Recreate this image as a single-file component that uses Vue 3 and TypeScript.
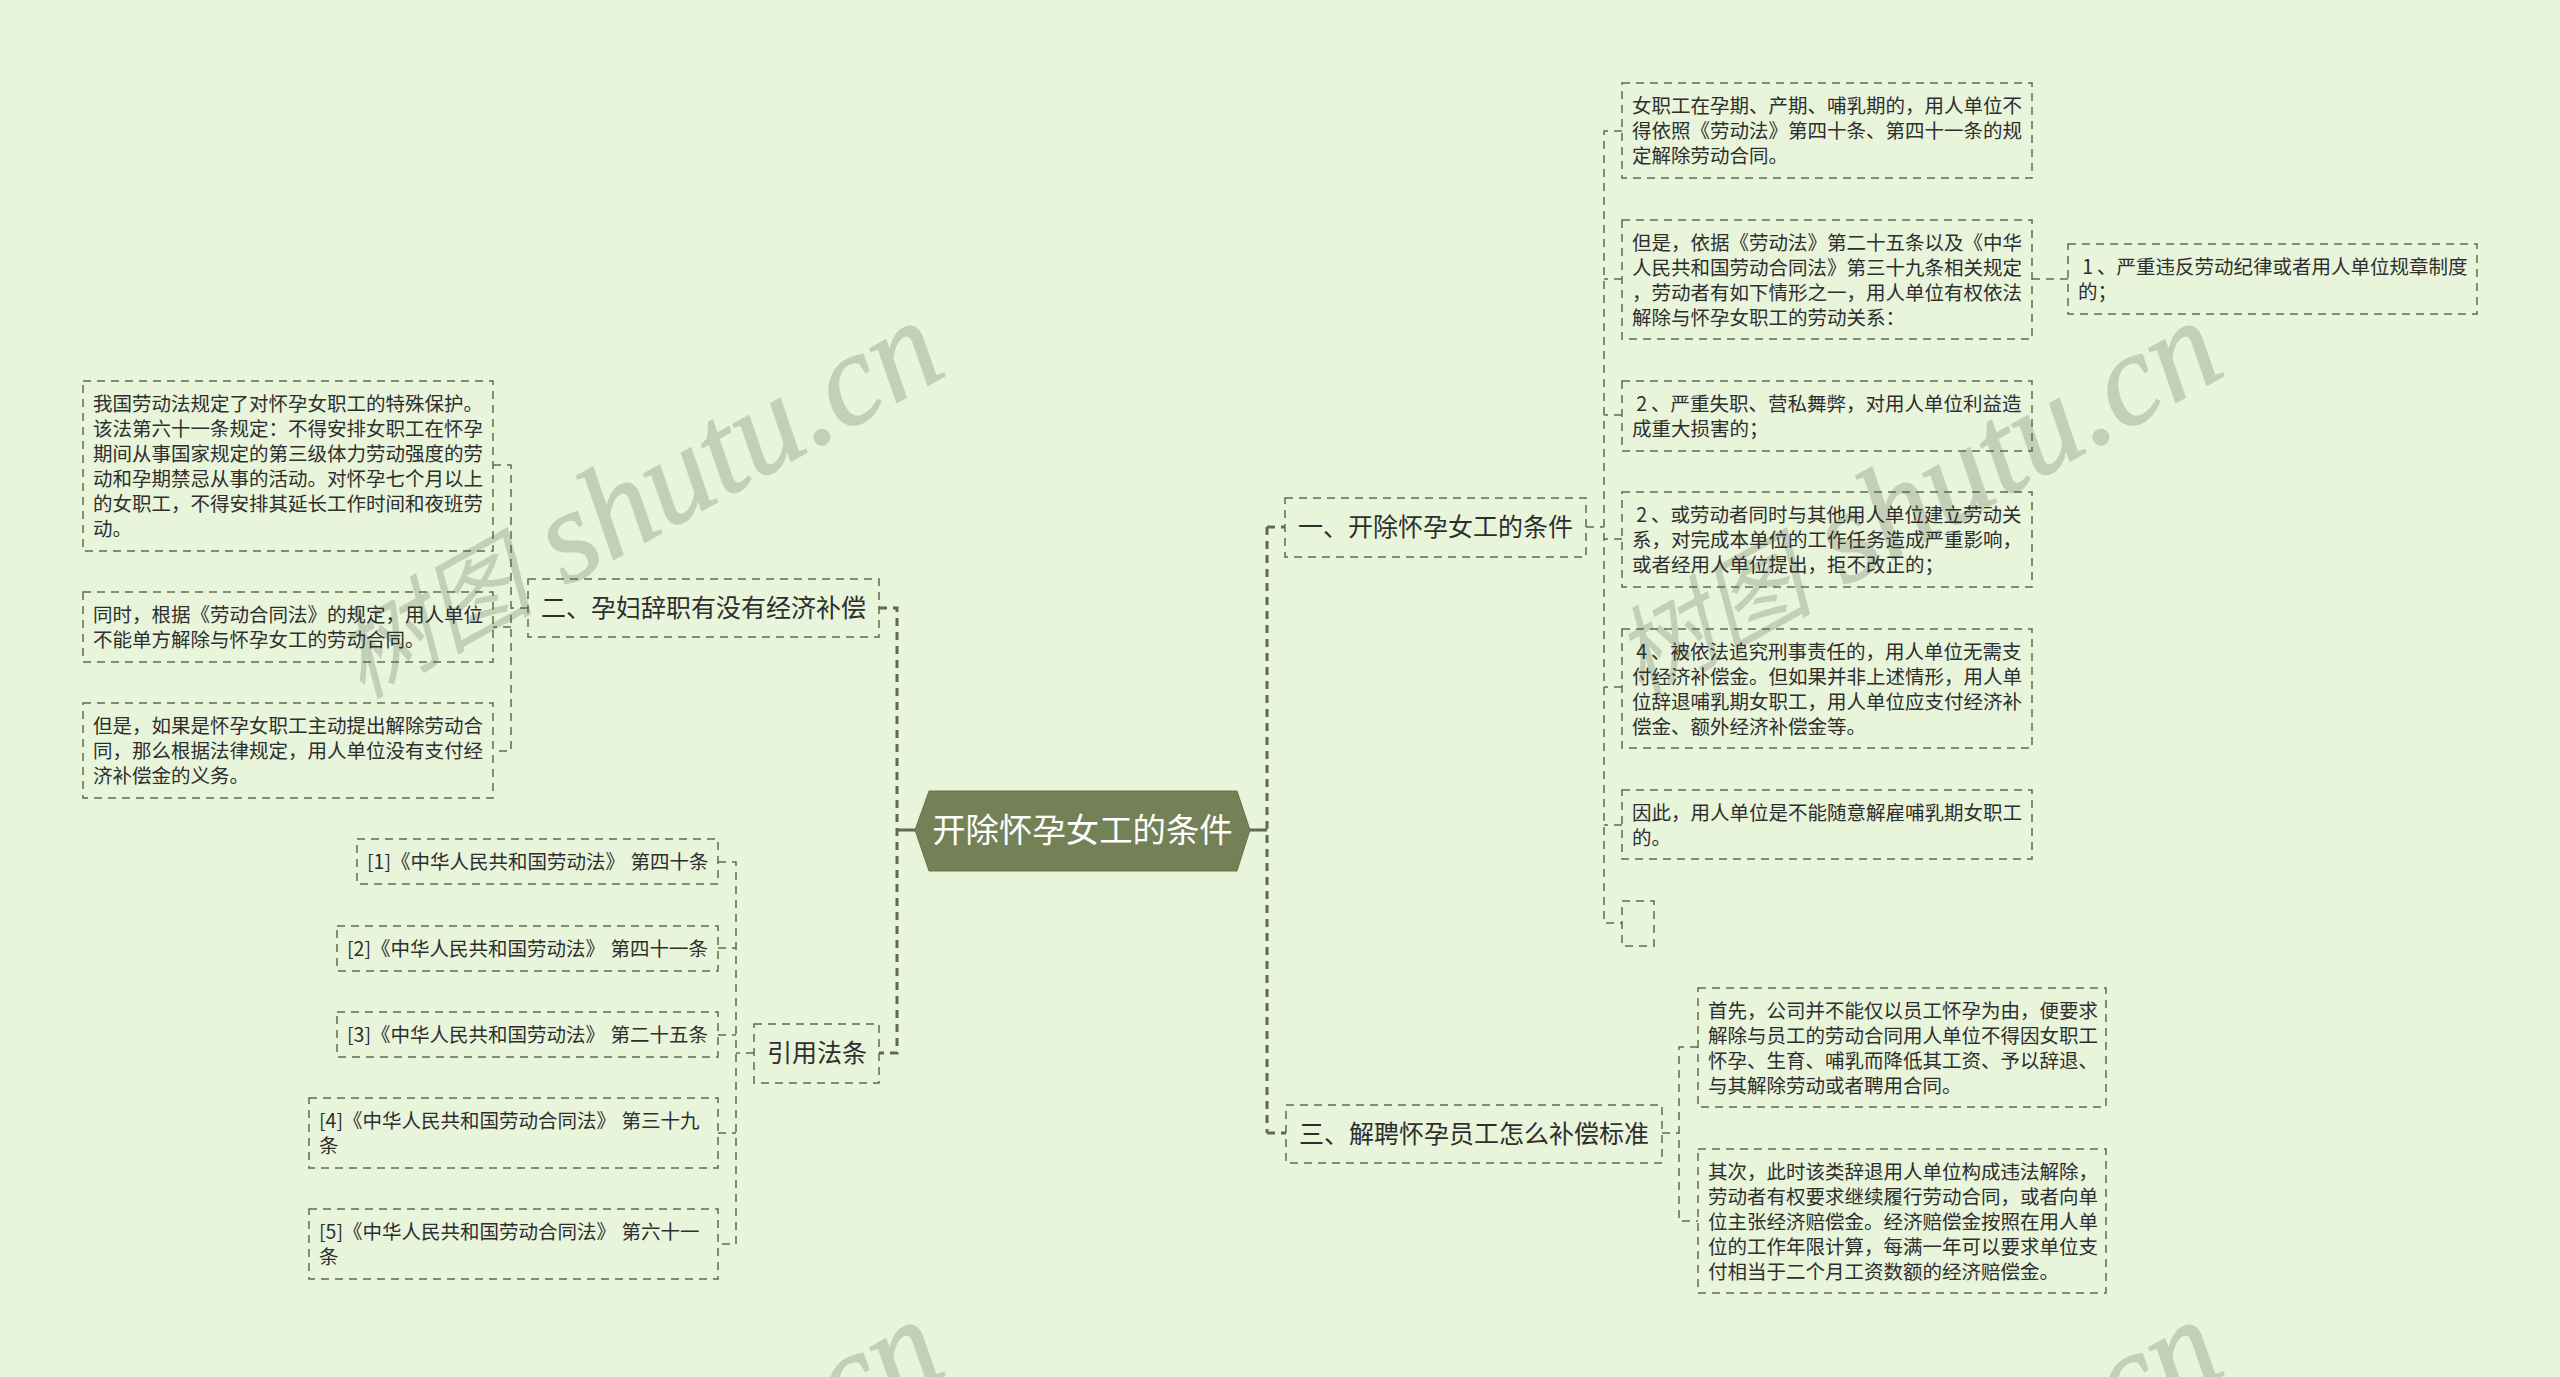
<script setup lang="ts">
type Box = { x: number; y: number; w: number; h: number; text: string; big?: boolean }

const boxes: Box[] = [
  { x: 83, y: 381, w: 410, h: 170, text: '我国劳动法规定了对怀孕女职工的特殊保护。\n该法第六十一条规定：不得安排女职工在怀孕\n期间从事国家规定的第三级体力劳动强度的劳\n动和孕期禁忌从事的活动。对怀孕七个月以上\n的女职工，不得安排其延长工作时间和夜班劳\n动。' },
  { x: 83, y: 592, w: 410, h: 70, text: '同时，根据《劳动合同法》的规定，用人单位\n不能单方解除与怀孕女工的劳动合同。' },
  { x: 83, y: 703, w: 410, h: 95, text: '但是，如果是怀孕女职工主动提出解除劳动合\n同，那么根据法律规定，用人单位没有支付经\n济补偿金的义务。' },
  { x: 528, y: 579, w: 351, h: 58, big: true, text: '二、孕妇辞职有没有经济补偿' },
  { x: 754, y: 1024, w: 125, h: 59, big: true, text: '引用法条' },
  { x: 357, y: 839, w: 361, h: 45, text: '[1]《中华人民共和国劳动法》 \u200a第四十条' },
  { x: 337, y: 926, w: 381, h: 45, text: '[2]《中华人民共和国劳动法》 \u200a第四十一条' },
  { x: 337, y: 1012, w: 381, h: 45, text: '[3]《中华人民共和国劳动法》 \u200a第二十五条' },
  { x: 309, y: 1098, w: 409, h: 70, text: '[4]《中华人民共和国劳动合同法》 \u200a第三十九\n条' },
  { x: 309, y: 1209, w: 409, h: 70, text: '[5]《中华人民共和国劳动合同法》 \u200a第六十一\n条' },
  { x: 1285, y: 498, w: 301, h: 59, big: true, text: '一、开除怀孕女工的条件' },
  { x: 1286, y: 1105, w: 376, h: 58, big: true, text: '三、解聘怀孕员工怎么补偿标准' },
  { x: 1622, y: 83, w: 410, h: 95, text: '女职工在孕期、产期、哺乳期的，用人单位不\n得依照《劳动法》第四十条、第四十一条的规\n定解除劳动合同。' },
  { x: 1622, y: 220, w: 410, h: 119, text: '但是，依据《劳动法》第二十五条以及《中华\n人民共和国劳动合同法》第三十九条相关规定\n，劳动者有如下情形之一，用人单位有权依法\n解除与怀孕女职工的劳动关系：' },
  { x: 2068, y: 244, w: 409, h: 70, text: ' 1\u2009、严重违反劳动纪律或者用人单位规章制度\n的；' },
  { x: 1622, y: 381, w: 410, h: 70, text: ' 2\u2009、严重失职、营私舞弊，对用人单位利益造\n成重大损害的；' },
  { x: 1622, y: 492, w: 410, h: 95, text: ' 2\u2009、或劳动者同时与其他用人单位建立劳动关\n系，对完成本单位的工作任务造成严重影响，\n或者经用人单位提出，拒不改正的；' },
  { x: 1622, y: 629, w: 410, h: 119, text: ' 4\u2009、被依法追究刑事责任的，用人单位无需支\n付经济补偿金。但如果并非上述情形，用人单\n位辞退哺乳期女职工，用人单位应支付经济补\n偿金、额外经济补偿金等。' },
  { x: 1622, y: 790, w: 410, h: 69, text: '因此，用人单位是不能随意解雇哺乳期女职工\n的。' },
  { x: 1622, y: 901, w: 32, h: 45, text: '' },
  { x: 1698, y: 988, w: 408, h: 119, text: '首先，公司并不能仅以员工怀孕为由，便要求\n解除与员工的劳动合同用人单位不得因女职工\n怀孕、生育、哺乳而降低其工资、予以辞退、\n与其解除劳动或者聘用合同。' },
  { x: 1698, y: 1149, w: 408, h: 144, text: '其次，此时该类辞退用人单位构成违法解除，\n劳动者有权要求继续履行劳动合同，或者向单\n位主张经济赔偿金。经济赔偿金按照在用人单\n位的工作年限计算，每满一年可以要求单位支\n付相当于二个月工资数额的经济赔偿金。' },
]

const thinLines: string[] = [
  'M493 465H511V751H493', 'M511 627H493', 'M528 608H511',
  'M718 862H736V1244H718', 'M718 948H736', 'M718 1035H736', 'M718 1133H736', 'M754 1053H736',
  'M1586 527H1604', 'M1622 131H1604V923H1622', 'M1622 279H1604', 'M1622 415H1604', 'M1622 539H1604', 'M1622 687H1604', 'M1622 825H1604',
  'M2032 279H2068',
  'M1662 1133H1679', 'M1698 1047H1679V1221H1698',
]
const thickLines: string[] = ['M879 608H897V1053H879', 'M1267 527V1133', 'M1267 527H1285', 'M1267 1133H1286']
const marks: { x: number; y: number }[] = [
  { x: 950, y: 373 }, { x: 2229, y: 373 }, { x: 950, y: 1372 }, { x: 2229, y: 1372 },
]
function boxStyle(b: Box) {
  return { left: b.x + 'px', top: b.y + 'px', width: b.w + 'px', height: b.h + 'px' }
}
</script>

<template>
  <div class="canvas">
    <svg class="layer" width="2560" height="1377">
      <text v-for="m in marks" :key="m.x + '-' + m.y" class="mark" text-anchor="end" :transform="`translate(${m.x} ${m.y}) rotate(-29)`"><tspan class="mark-cjk">树图</tspan> shutu.cn</text>
      <path v-for="d in thinLines" :key="d" class="thin" :d="d" />
      <path v-for="d in thickLines" :key="d" class="thick" :d="d" />
      <path class="solid" d="M897 830H915M1250 830H1267" />
      <rect v-for="b in boxes" :key="b.x + '-' + b.y" class="thin" :x="b.x" :y="b.y" :width="b.w" :height="b.h" />
      <polygon class="root-shape" points="929,791 1237,791 1250,830 1237,871 929,871 915,830" />
    </svg>
    <div v-for="b in boxes" :key="b.x + '-' + b.y" class="node" :class="{ big: b.big }" :style="boxStyle(b)">{{ b.text }}</div>
    <div class="root">开除怀孕女工的条件</div>
  </div>
</template>

<style scoped>
.canvas {
  position: relative;
  width: 2560px;
  height: 1377px;
  overflow: hidden;
  background: #e8f5db;
  font-family: "Noto Sans CJK SC", sans-serif;
  color: #2e2e2e;
}
.layer {
  position: absolute;
  left: 0;
  top: 0;
}
.mark {
  font-family: "Liberation Serif", "Noto Sans CJK SC", serif;
  font-style: italic;
  font-size: 131px;
  fill: #c3cfb7;
  stroke: #c3cfb7;
  stroke-width: 1.5px;
}
.mark-cjk {
  font-size: 100px;
  stroke-width: 0;
}
.thin,
.thick {
  fill: none;
  stroke: #5f6b4c;
  stroke-dasharray: 8 6;
}
.thin {
  stroke-width: 1.5;
}
.thick {
  stroke-width: 3;
}
.solid {
  fill: none;
  stroke: #5f6b4c;
  stroke-width: 3;
}
.root-shape {
  fill: #748157;
  stroke: #66744c;
  stroke-width: 1;
}
.node {
  position: absolute;
  box-sizing: border-box;
  padding: 9px 10px 11px;
  font-size: 19.5px;
  line-height: 25px;
  white-space: pre;
  font-weight: 400;
}
.node.big {
  display: flex;
  align-items: center;
  padding: 0 13px 4px;
  font-size: 25px;
}
.root {
  position: absolute;
  left: 915px;
  top: 791px;
  width: 335px;
  height: 80px;
  padding-bottom: 8px;
  box-sizing: border-box;
  display: flex;
  align-items: center;
  justify-content: center;
  font-size: 33.4px;
  font-weight: 400;
  color: #fff;
  white-space: nowrap;
}
</style>
